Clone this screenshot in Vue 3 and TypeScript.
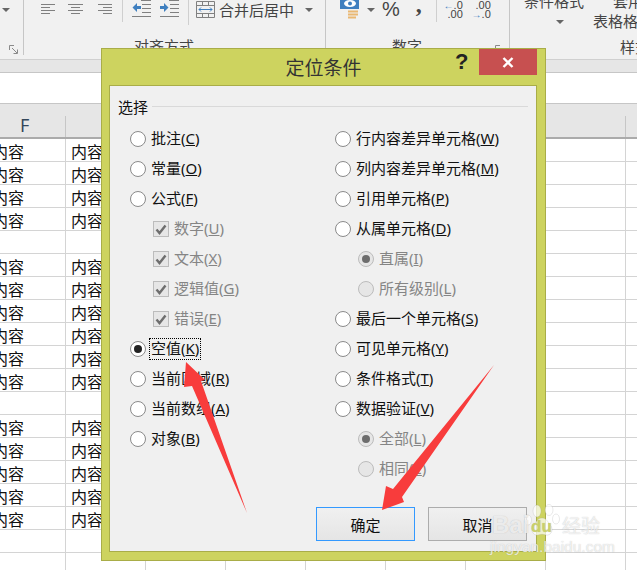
<script setup lang="ts">
interface Opt { label: string; key: string; kind: 'radio' | 'check' | 'subradio'; on?: boolean; focus?: boolean }

const rows: boolean[] = [
  true, true, true, true, false,
  true, true, true, true, true, true, false,
  true, true, true, true, true, false, false
]
const columns: number[] = [0, 1, 2, 3, 4, 5, 6, 7]

const left: Opt[] = [
  { label: '批注', key: 'C', kind: 'radio' },
  { label: '常量', key: 'O', kind: 'radio' },
  { label: '公式', key: 'F', kind: 'radio' },
  { label: '数字', key: 'U', kind: 'check', on: true },
  { label: '文本', key: 'X', kind: 'check', on: true },
  { label: '逻辑值', key: 'G', kind: 'check', on: true },
  { label: '错误', key: 'E', kind: 'check', on: true },
  { label: '空值', key: 'K', kind: 'radio', on: true, focus: true },
  { label: '当前区域', key: 'R', kind: 'radio' },
  { label: '当前数组', key: 'A', kind: 'radio' },
  { label: '对象', key: 'B', kind: 'radio' }
]
const right: Opt[] = [
  { label: '行内容差异单元格', key: 'W', kind: 'radio' },
  { label: '列内容差异单元格', key: 'M', kind: 'radio' },
  { label: '引用单元格', key: 'P', kind: 'radio' },
  { label: '从属单元格', key: 'D', kind: 'radio' },
  { label: '直属', key: 'I', kind: 'subradio', on: true },
  { label: '所有级别', key: 'L', kind: 'subradio' },
  { label: '最后一个单元格', key: 'S', kind: 'radio' },
  { label: '可见单元格', key: 'Y', kind: 'radio' },
  { label: '条件格式', key: 'T', kind: 'radio' },
  { label: '数据验证', key: 'V', kind: 'radio' },
  { label: '全部', key: 'L', kind: 'subradio', on: true },
  { label: '相同', key: 'E', kind: 'subradio' }
]
const optionColumns: Opt[][] = [left, right]
</script>

<template>
  <div class="screen">
    <header class="ribbon">
      <section class="group g0">
        <span class="caret first-caret"></span>
        <svg class="launcher l0" width="9" height="9" viewBox="0 0 9 9"><path d="M.5 5V.5H5M3 3l5 5M8.500 4.500v4h-4" fill="none" stroke="#8a8a8a"/></svg>
      </section>
      <section class="group g1">
        <div class="tools">
          <svg width="15" height="12" viewBox="0 0 15 12" class="ic a1"><path d="M0 1.500h14M0 4.500h9M0 7.500h14M0 10.500h9" stroke="#808080"/></svg>
          <svg width="16" height="12" viewBox="0 0 16 12" class="ic a2"><path d="M0 1.500h15M3 4.500h9M0 7.500h15M3 10.500h9" stroke="#808080"/></svg>
          <svg width="15" height="12" viewBox="0 0 15 12" class="ic a3"><path d="M1 1.500h14M6 4.500h9M1 7.500h14M6 10.500h9" stroke="#808080"/></svg>
          <i class="vsep s1"></i>
          <svg width="19" height="17" viewBox="0 0 19 17" class="ic a4"><path d="M9 .5h10M10 4.500h9M10 8.500h9M10 12.500h9M0 16.500h19" stroke="#808080"/><path d="M5 3 .5 7.500 5 12V9h4V6H5z" fill="#3f7fbf"/></svg>
          <svg width="19" height="17" viewBox="0 0 19 17" class="ic a5"><path d="M9 .5h10M10 4.500h9M10 8.500h9M10 12.500h9M0 16.500h19" stroke="#808080"/><path d="M4 3l4.500 4.500L4 12V9H0V6h4z" fill="#3f7fbf"/></svg>
          <i class="vsep s2"></i>
          <svg width="19" height="17" viewBox="0 0 19 17" class="ic a6"><path d="M.5.5h18v16H.5zM.5 4.500h18M.5 12.500h18M6.500.5v4M12.500.5v4M6.500 12.500v4M12.500 12.500v4" fill="none" stroke="#808080"/><path d="M3 8.500h13M5 6.500l-2 2 2 2M14 6.500l2 2-2 2" fill="none" stroke="#3f7fbf"/></svg>
          <span class="merge">合并后居中</span>
          <span class="caret merge-caret"></span>
        </div>
        <div class="group-label align-label">对齐方式</div>
      </section>
      <section class="group g2">
        <div class="tools">
          <svg width="20" height="19" viewBox="0 0 20 19" class="ic n1"><rect x="0" y="-2" width="19" height="11" fill="#3f7fbf"/><ellipse cx="10" cy="3.500" rx="6" ry="3.500" fill="#fff"/><circle cx="10" cy="3.500" r="2" fill="#3f7fbf"/><path d="M8 11.500h10M8 14.500h10M8 17.500h8" stroke="#eab873" stroke-width="2"/></svg>
          <span class="caret n-caret"></span>
          <span class="pct">%</span>
          <span class="comma">,</span>
          <i class="vsep s3"></i>
          <div class="dec d1"><span><b>←</b>.0</span><span>.00</span></div>
          <div class="dec d2"><span>.00</span><span><b>→</b>.0</span></div>
        </div>
        <div class="group-label num-label">数字</div>
        <svg class="launcher l2" width="9" height="9" viewBox="0 0 9 9"><path d="M.5 5V.5H5" fill="none" stroke="#8a8a8a"/></svg>
      </section>
      <section class="group g3">
        <div class="style-a">
          <span class="cond">条件格式</span>
          <span class="caret cond-caret"></span>
        </div>
        <div class="style-b">
          <span class="taoyong">套用</span>
          <span>表格格式</span>
        </div>
        <div class="style-label">样式</div>
      </section>
    </header>

    <div class="band"></div>
    <div class="formula"></div>

    <div class="col-head">
      <div v-for="c in columns" :key="c" class="head-cell">
        <span v-if="c === 0" class="head-f">F</span>
        <span v-if="c === 6" class="head-m">M</span>
      </div>
    </div>

    <div class="sheet">
      <div v-for="(filled, r) in rows" :key="r" class="row">
        <div v-for="c in columns" :key="c" class="cell" :class="{ firstcell: c === 0 }">
          <span v-if="filled && c < 2">内容</span>
        </div>
      </div>
    </div>

    <div class="dialog">
      <div class="titlebar">
        <span class="title">定位条件</span>
        <span class="help">?</span>
        <span class="close">
          <svg width="12" height="11" viewBox="0 0 12 11"><path d="M1.500 1l9 9M10.500 1l-9 9" stroke="#fff" stroke-width="2.400"/></svg>
        </span>
      </div>
      <div class="panel">
        <div class="legend"><span>选择</span><i></i></div>
        <div class="options">
          <div v-for="(col, i) in optionColumns" :key="i" class="opt-col">
            <div v-for="o in col" :key="o.label" class="opt" :class="[o.kind]">
              <span v-if="o.kind === 'check'" class="box">
                <svg width="12" height="11" viewBox="0 0 12 11"><path d="M1.500 5.500 4.500 9 10.500 1.500" fill="none" stroke="#6e6e6e" stroke-width="2.400"/></svg>
              </span>
              <span v-else class="dot" :class="{ on: o.on }"></span>
              <span class="lab" :class="{ focus: o.focus }">{{ o.label }}(<u>{{ o.key }}</u>)</span>
            </div>
          </div>
        </div>
        <div class="buttons">
          <button class="btn primary">确定</button>
          <button class="btn">取消</button>
        </div>
      </div>
    </div>

    <svg class="arrows" width="637" height="570" viewBox="0 0 637 570">
      <path d="M186 362 205 380 201 381 247 513 192 386 184 387Z" fill="#f83c3c"/>
      <path d="M382 510 386 486 393 489 494 365 402 497 404 502Z" fill="#f83c3c"/>
    </svg>

    <div class="watermark">
      <svg class="wm-paw" width="36" height="34" viewBox="0 0 36 34">
        <g fill="rgba(255,255,255,.7)" stroke="rgba(150,150,150,.35)" stroke-width=".6">
          <ellipse cx="13" cy="7" rx="4" ry="6"/>
          <ellipse cx="25" cy="6" rx="4" ry="5.500"/>
          <ellipse cx="4" cy="16" rx="3.500" ry="5"/>
          <ellipse cx="32" cy="15" rx="3.500" ry="5"/>
          <path d="M18 14c5 0 6 5 9 8 3 5-1 10-5 9-3-1-5-1-8 0-4 1-8-4-5-9 3-3 4-8 9-8z"/>
        </g>
      </svg>
      <span class="wm-bai">Bai</span>
      <span class="wm-du">du</span>
      <span class="wm-jy">经验</span>
      <span class="wm-url">jingyan.baidu.com</span>
    </div>
  </div>
</template>

<style>
html, body { margin: 0; padding: 0; overflow: hidden; background: #fff; }
</style>

<style scoped>
.screen {
  position: relative;
  width: 637px;
  height: 570px;
  overflow: hidden;
  background: #fff;
  font-family: "Noto Sans", "Noto Sans CJK SC", sans-serif;
  color: #111;
}
.ribbon {
  display: flex;
  height: 60px;
  box-sizing: border-box;
  background: #f1f1f1;
  border-bottom: 1px solid #d0d0d0;
  color: #444;
}
.group { position: relative; flex: none; height: 55px; box-sizing: border-box; border-right: 1px solid #c6c6c6; }
.g0 { width: 24px; }
.g1 { width: 302px; }
.g2 { width: 184px; }
.g3 { width: 127px; border-right: 0; display: flex; }
.tools { display: flex; align-items: flex-start; height: 40px; }
.caret { display: inline-block; width: 0; height: 0; border: 4px solid transparent; border-top: 4px solid #666; border-bottom: 0; }
.first-caret { position: absolute; left: 2px; top: 8px; }
.launcher { position: absolute; top: 45px; }
.l0 { left: 9px; }
.l2 { left: 169px; }
.ic { flex: none; }
.a1 { margin: 3px 0 0 17px; }
.a2 { margin: 3px 0 0 12px; }
.a3 { margin: 3px 0 0 13px; }
.vsep { flex: none; display: block; width: 1px; background: #cfcfcf; }
.s1 { height: 22px; margin-left: 10px; }
.a4 { margin: 0 0 0 9px; }
.a5 { margin: 0 0 0 9px; }
.s2 { height: 25px; margin-left: 9px; }
.a6 { margin: 1px 0 0 7px; }
.merge { flex: none; margin: 0 0 0 4px; font-size: 15px; line-height: 20px; }
.merge-caret { flex: none; margin: 8px 0 0 11px; }
.group-label { position: absolute; top: 36px; font-size: 15px; line-height: 20px; white-space: nowrap; }
.align-label { left: 110px; }
.num-label { left: 66px; }
.n1 { margin: 0 0 0 14px; }
.n-caret { flex: none; margin: 8px 0 0 7px; }
.pct { flex: none; margin: -3px 0 0 7px; font-family: "Liberation Sans", sans-serif; font-size: 20px; font-weight: 400; line-height: 24px; }
.comma { flex: none; margin: -8px 0 0 16px; font-family: "Liberation Serif", serif; font-size: 24px; font-weight: 700; line-height: 24px; }
.s3 { height: 22px; margin-left: 14px; }
.dec { flex: none; display: flex; flex-direction: column; align-items: flex-end; font-family: "Liberation Sans", sans-serif; font-size: 11px; line-height: 9px; padding-top: 1px; width: 16px; }
.dec b { color: #3f7fbf; font-size: 10px; }
.d1 { margin-left: 10px; }
.d2 { margin-left: 12px; }
.style-a { width: 83px; padding-left: 14px; margin-top: -9px; display: flex; flex-direction: column; align-items: flex-start; flex: none; box-sizing: border-box; font-size: 15px; line-height: 20px; white-space: nowrap; }
.cond-caret { margin: 9px 0 0 32px; }
.style-b { display: flex; flex-direction: column; align-items: flex-start; width: 60px; flex: none; margin-top: -9px; font-size: 15px; line-height: 20px; white-space: nowrap; }
.taoyong { margin-left: 20px; }
.style-label { position: absolute; left: 110px; top: 37px; font-size: 15px; line-height: 20px; white-space: nowrap; }
.band { height: 12px; background: #e6e6e6; border-bottom: 1px solid #c6c6c6; }
.formula { height: 30px; background: #fff; border-bottom: 1px solid #c6c6c6; }
.col-head {
  display: grid;
  grid-template-columns: 66px repeat(7, 80px);
  height: 35px;
  box-sizing: border-box;
  background: #e6e6e6;
  border-bottom: 2px solid #ababab;
}
.head-cell { position: relative; height: 21px; margin-top: 12px; border-right: 1px solid #c6c6c6; }
.head-f, .head-m { position: absolute; top: -3px; font-size: 18px; line-height: 24px; color: #33465a; }
.head-f { left: 20px; }
.head-m { left: 32px; }
.row { display: grid; grid-template-columns: 66px repeat(7, 80px); height: 23px; box-sizing: border-box; border-bottom: 1px solid #d4d4d4; }
.cell { border-right: 1px solid #d4d4d4; padding-left: 5px; font-family: "Noto Sans CJK SC", sans-serif; font-size: 16px; line-height: 24px; overflow: hidden; white-space: nowrap; color: #111; }
.firstcell { padding-left: 0; text-indent: -8px; }
.dialog {
  position: absolute;
  left: 101px;
  top: 48px;
  width: 445px;
  height: 513px;
  box-sizing: border-box;
  background: #cdd35f;
  border: 1px solid #a9ad48;
  display: flex;
  flex-direction: column;
}
.titlebar { position: relative; height: 36px; flex: none; text-align: center; }
.title { display: inline-block; font-family: "Noto Sans CJK SC", sans-serif; font-size: 19px; line-height: 35px; color: #333; }
.help { position: absolute; left: 353px; top: 0; font-family: "Liberation Sans", sans-serif; font-size: 22px; font-weight: 700; line-height: 26px; color: #222; }
.close { position: absolute; left: 377px; top: 0; width: 58px; height: 26px; background: #c75050; display: flex; align-items: center; justify-content: center; }
.panel {
  flex: none;
  margin-left: 7px;
  width: 428px;
  height: 467px;
  box-sizing: border-box;
  background: #f0f0f0;
  border: 1px solid #a9ad48;
  display: flex;
  flex-direction: column;
}
.legend { display: flex; align-items: center; gap: 4px; height: 20px; margin: 10px 8px 0 8px; font-family: "Noto Sans CJK SC", sans-serif; font-size: 15px; color: #111; }
.legend i { flex: 1; height: 1px; background: #d9d9d9; }
.options { display: grid; grid-template-columns: 205px 1fr; margin: 8px 0 0 20px; }
.opt { display: flex; align-items: center; height: 30px; font-size: 15px; color: #111; }
.lab { margin-left: 5px; margin-top: -2px; white-space: nowrap; line-height: 20px; font-family: "Noto Sans", "Noto Sans CJK SC", sans-serif; }
.dot { flex: none; width: 16px; height: 16px; box-sizing: border-box; border: 1px solid #8a8a8a; border-radius: 50%; background: #fff; position: relative; }
.dot.on::after { content: ""; position: absolute; left: 3px; top: 3px; width: 8px; height: 8px; border-radius: 50%; background: #222; }
.check, .subradio { padding-left: 23px; color: #858585; }
.subradio .dot { background: #e6e6e6; border-color: #bcbcbc; }
.subradio .dot.on::after { background: #6d6d6d; }
.box { flex: none; width: 16px; height: 16px; box-sizing: border-box; border: 1px solid #bcbcbc; background: #e6e6e6; display: flex; align-items: center; justify-content: center; }
.focus { margin-left: 3px; margin-top: 0; padding: 0 2px; height: 22px; line-height: 20px; outline: 1px dotted #000; outline-offset: -1px; box-sizing: border-box; }
.buttons { display: flex; justify-content: flex-end; gap: 13px; margin: 23px 9px 0 0; }
.btn { width: 99px; height: 34px; box-sizing: border-box; padding: 0; border: 1px solid #acacac; background: linear-gradient(#f0f0f0, #e5e5e5); font-family: "Noto Sans CJK SC", sans-serif; font-size: 15px; color: #111; }
.primary { border-color: #3399ff; }
.arrows { position: absolute; left: 0; top: 0; pointer-events: none; }
.watermark { position: absolute; left: 488px; top: 500px; width: 120px; height: 60px; color: rgba(255,255,255,.72); text-shadow: 0 0 1px rgba(120,120,120,.45); pointer-events: none; white-space: nowrap; }
.wm-bai { position: absolute; left: 4px; top: 10px; font-family: "Liberation Sans", sans-serif; font-size: 24px; font-weight: 700; line-height: 30px; }
.wm-du { position: absolute; left: 43px; top: 12px; font-family: "Liberation Sans", sans-serif; font-size: 17px; font-weight: 700; line-height: 30px; color: rgba(205,211,95,.9); }
.wm-paw { position: absolute; left: 36px; top: 4px; }
.wm-jy { position: absolute; left: 74px; top: 12px; font-family: "Noto Sans CJK SC", sans-serif; font-size: 19px; line-height: 26px; }
.wm-url { position: absolute; left: 2px; top: 37px; font-family: "Liberation Sans", sans-serif; font-size: 15.500px; line-height: 20px; }
</style>
